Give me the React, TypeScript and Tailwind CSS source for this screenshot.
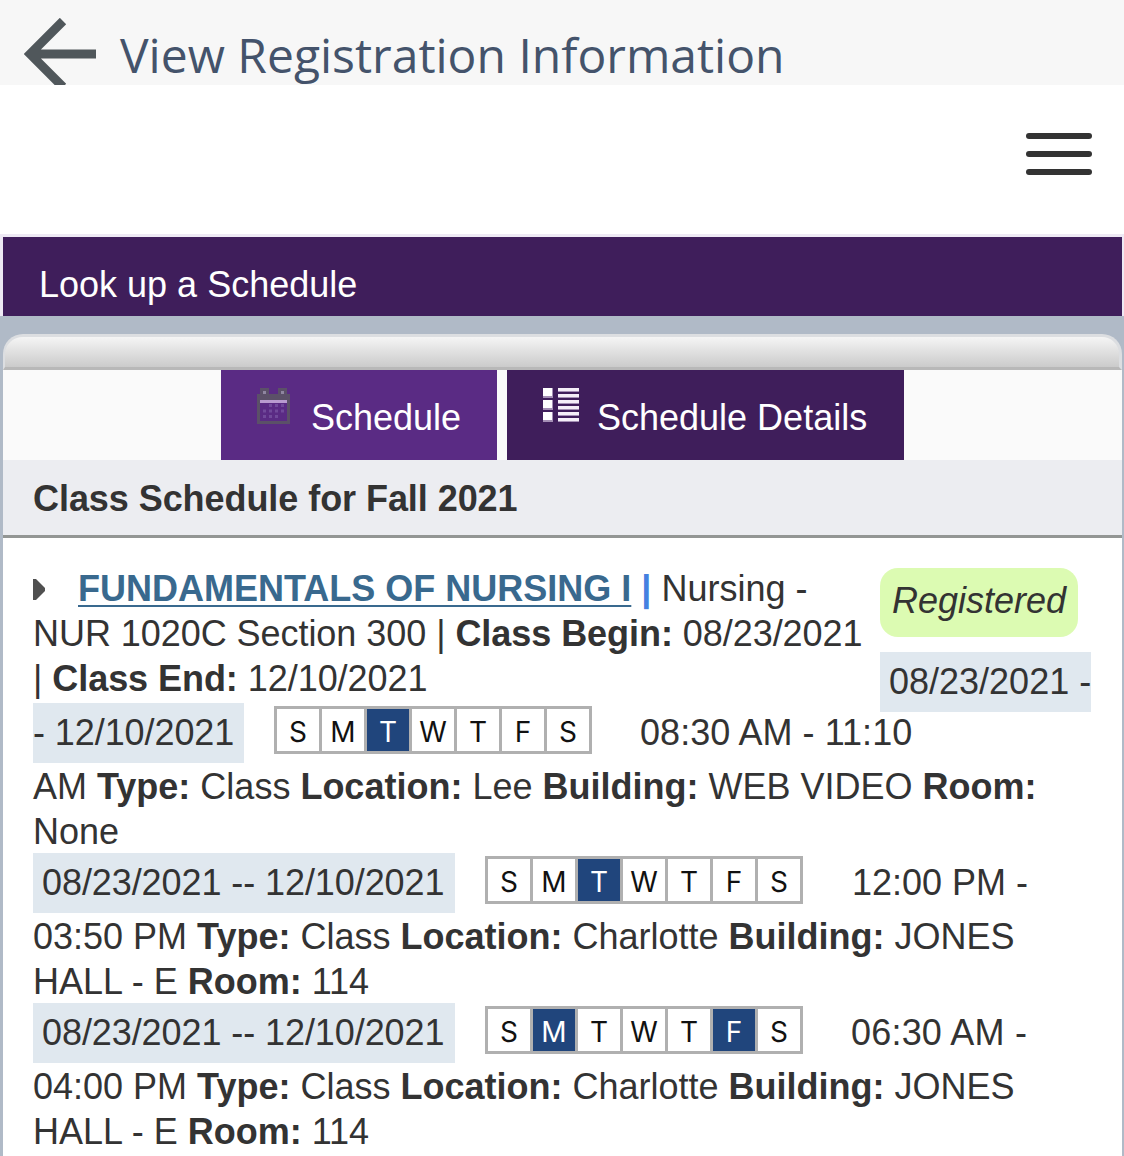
import clsx from 'clsx';

const days = ['S', 'M', 'T', 'W', 'T', 'F', 'S'];

function WeekDays({ active }: { active: number[] }) {
  return (
    <div className="flex h-12 gap-[3px] bg-[#b0b0b0] p-[3px] font-['Inter',sans-serif] text-[28px] leading-[46px]">
      {days.map((day, i) => (
        <div
          key={i}
          className={clsx(
            'h-[42px] w-[42px] text-center',
            active.includes(i) ? 'bg-[#20457c] text-white' : 'bg-white text-[#111]'
          )}
        >
          {day}
        </div>
      ))}
    </div>
  );
}

function CalendarIcon() {
  return (
    <svg className="h-9 w-[34px]" viewBox="0 0 34 36">
      <path d="M0 6H33V36H0Z M3 15V33H30V15Z" fill="#5b5068" fillRule="evenodd" />
      <path d="M3 0h9v8H3z M21 0h9v8h-9z" fill="#5b5068" />
      <path d="M6 3h3v3H6z M24 3h3v3h-3z" fill="#8f86a0" />
      <path d="M3 12h27v3H3z" fill="#b99bd0" />
      {[16, 21.5, 27].map((y) =>
        [6, 12, 18, 24].map((x) =>
          (y === 27 && x === 24) || (y === 16 && x === 6) ? null : (
            <rect key={`${x}-${y}`} x={x} y={y} width="3" height="3" fill="#70499a" />
          )
        )
      )}
    </svg>
  );
}

function ListIcon() {
  return (
    <svg className="h-[34px] w-9" viewBox="0 0 36 34">
      {[0, 12, 24].map((y) => (
        <g key={y}>
          <rect x="0" y={y} width="10" height="10" fill="#a48fb5" />
          <rect x="0" y={y} width="9" height="8" fill="#fff" />
        </g>
      ))}
      {[0, 6, 12, 18, 24, 30].map((y) => (
        <g key={y}>
          <rect x="15" y={y} width="21" height="4" fill="#a48fb5" />
          <rect x="15" y={y} width="21" height="3" fill="#f4eef8" />
        </g>
      ))}
    </svg>
  );
}

export default function App() {
  return (
    <div className="h-[1156px] w-[1124px] overflow-hidden whitespace-nowrap bg-white font-['Liberation_Sans',Arial,sans-serif] text-4xl leading-[45px] text-[#333]">
      {/* Page title */}
      <header className="flex h-[85px] items-start bg-[#f7f7f7] pl-6">
        <svg className="mt-[18px] h-[67px] w-[72px] shrink-0" viewBox="0 0 72 67" fill="none">
          <path d="M39 3 L6 36 L39 69 M6 36 H72" stroke="#50575b" strokeWidth="9" />
        </svg>
        <h1 className="ml-6 pt-[25px] font-['Open_Sans',sans-serif] text-5xl leading-[60px] text-[#44536b]">
          View Registration Information
        </h1>
      </header>

      {/* Menu bar */}
      <div className="flex h-[149px] justify-end pt-12 pr-8">
        <div className="flex w-[66px] flex-col gap-3">
          <div className="h-1.5 rounded-full bg-[#333]" />
          <div className="h-1.5 rounded-full bg-[#333]" />
          <div className="h-1.5 rounded-full bg-[#333]" />
        </div>
      </div>

      <div className="h-[82px] border-t-[3px] border-r-2 border-l-[3px] border-[#eee9f4] bg-[#3f1e5b] pt-[25px] pl-9 text-white">
        Look up a Schedule
      </div>

      {/* Schedule panel */}
      <main className="h-[840px] bg-[#b0bac7] pt-[18px] pr-0.5 pl-[3px]">
        <div className="h-9 rounded-t-[20px] border-t-[3px] border-r-[3px] border-b-[3px] border-l-2 border-t-[#dcdee1] border-r-[#dcdee1] border-b-[#b8b8b8] border-l-[#dcdee1] bg-linear-to-b from-[#f5f5f5] to-[#cbcbcb]" />

        <nav className="flex h-[90px] gap-2.5 bg-[#fafafa] pl-[218px] text-white">
          <div className="flex w-[276px] bg-[#5a2b84] pl-9">
            <div className="pt-[18px]">
              <CalendarIcon />
            </div>
            <span className="ml-5 pt-[25px]">Schedule</span>
          </div>
          <div className="flex w-[397px] bg-[#3f1e5b] pl-9">
            <div className="pt-[18px]">
              <ListIcon />
            </div>
            <span className="ml-[18px] pt-[25px]">Schedule Details</span>
          </div>
        </nav>

        <h2 className="h-[78px] border-b-[3px] border-[#939694] bg-[#ecedf1] pt-4 pl-[30px] font-bold tracking-[-0.06px]">
          Class Schedule for Fall 2021
        </h2>

        <section className="h-[618px] bg-white pt-7 pl-[30px]">
          <div className="flex h-[137px]">
            <div className="w-[847px]">
              <div className="flex">
                <svg className="mt-[13px] mr-[33px] h-[21px] w-3" viewBox="0 0 12 21">
                  <path d="M0 0h3l9 9v3l-9 9H0z" fill="#505050" />
                </svg>
                <div>
                  <a className="font-bold text-[#39698e] underline decoration-2 underline-offset-4">
                    FUNDAMENTALS OF NURSING I
                  </a>{' '}
                  <b className="text-[#4481e0]">|</b> Nursing -
                </div>
              </div>
              <div className="tracking-[-0.05px]">
                NUR 1020C Section 300 | <b>Class Begin:</b> 08/23/2021
              </div>
              <div className="tracking-[-0.05px]">
                | <b>Class End:</b> 12/10/2021
              </div>
            </div>
            <div className="flex flex-col items-start gap-[15px] pt-0.5">
              <div className="h-[69px] w-[198px] shrink-0 rounded-[18px] bg-[#dcfbb2] pt-2.5 text-center italic">
                Registered
              </div>
              <div className="h-[60px] w-[211px] shrink-0 bg-[#e0e8ef] pt-[7px] pl-[9px]">
                08/23/2021 -
              </div>
            </div>
          </div>

          <div className="flex h-[60px]">
            <div className="w-[211px] bg-[#e0e8ef] pt-[7px] tracking-[-0.08px]">- 12/10/2021</div>
            <div className="ml-[30px] pt-[3px]">
              <WeekDays active={[2]} />
            </div>
            <div className="ml-12 pt-[7px] tracking-[0.05px]">08:30 AM - 11:10</div>
          </div>
          <div className="h-[90px] pt-px">
            <div>
              AM <b>Type:</b> Class <b>Location:</b> Lee <b>Building:</b> WEB VIDEO <b>Room:</b>
            </div>
            <div>None</div>
          </div>

          <div className="flex h-[60px]">
            <div className="w-[422px] bg-[#e0e8ef] pt-[7px] pl-[9px] tracking-[-0.08px]">
              08/23/2021 -- 12/10/2021
            </div>
            <div className="ml-[30px] pt-[3px]">
              <WeekDays active={[2]} />
            </div>
            <div className="ml-[49px] pt-[7px]">12:00 PM -</div>
          </div>
          <div className="h-[90px] pt-px">
            <div>
              03:50 PM <b>Type:</b> Class <b>Location:</b> Charlotte <b>Building:</b> JONES
            </div>
            <div>
              HALL - E <b>Room:</b> 114
            </div>
          </div>

          <div className="flex h-[60px]">
            <div className="w-[422px] bg-[#e0e8ef] pt-[7px] pl-[9px] tracking-[-0.08px]">
              08/23/2021 -- 12/10/2021
            </div>
            <div className="ml-[30px] pt-[3px]">
              <WeekDays active={[1, 5]} />
            </div>
            <div className="ml-12 pt-[7px] tracking-[0.2px]">06:30 AM -</div>
          </div>
          <div className="h-[90px] pt-px">
            <div>
              04:00 PM <b>Type:</b> Class <b>Location:</b> Charlotte <b>Building:</b> JONES
            </div>
            <div>
              HALL - E <b>Room:</b> 114
            </div>
          </div>
        </section>
      </main>
    </div>
  );
}
